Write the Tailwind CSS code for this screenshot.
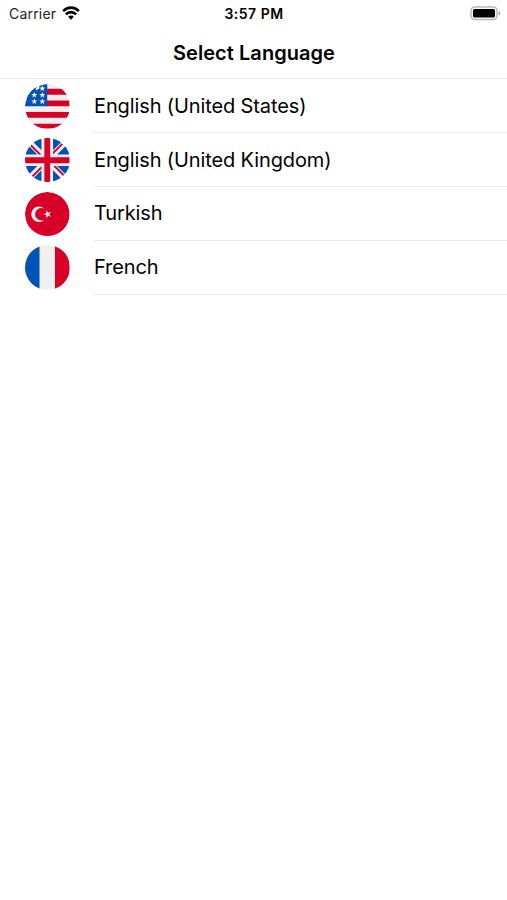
<!DOCTYPE html>
<html lang="en">
<head>
<meta charset="utf-8">
<title>Select Language</title>
<script src="https://cdn.jsdelivr.net/npm/@tailwindcss/browser@4"></script>
</head>
<body class="bg-white font-['Inter','Liberation_Sans',sans-serif] text-black">
<div class="flex h-[900px] w-[507px] flex-col overflow-hidden bg-white">
  <div class="grid h-[27px] shrink-0 grid-cols-3 items-center pl-[9px] pr-[6px]">
    <div class="flex items-center gap-[6px]">
      <span class="text-[14px] leading-[27px] tracking-[0.2px] text-[#222]">Carrier</span>
      <svg class="mb-[2px] h-[14px] w-[18px]" viewBox="0 0 19 14" preserveAspectRatio="none">
        <g fill="none" stroke="#000" stroke-width="2.7">
          <path d="M1.2 5.1a11.7 11.7 0 0 1 16.6 0"/>
          <path d="M4.1 8.4a7.6 7.6 0 0 1 10.8 0"/>
        </g>
        <path d="M9.5 13.7 6.5 10.7a4.2 4.2 0 0 1 6 0Z"/>
      </svg>
    </div>
    <div class="pr-[2px] text-center text-[14px] font-semibold leading-[27px] tracking-[0.5px]">3:57 PM</div>
    <svg class="h-[15px] w-[31px] justify-self-end" viewBox="0 0 31 15">
      <rect x="1" y="1" width="26" height="12.5" rx="3.8" fill="#fff" stroke="#b9b9b9" stroke-width="1.5"/>
      <rect x="3" y="3" width="22" height="8.5" rx="1.5"/>
      <path d="M28.6 5a2.4 2.4 0 0 1 0 4.6Z" fill="#aaa"/>
    </svg>
  </div>
  <header class="flex h-[52px] shrink-0 items-center justify-center border-b border-[#ebebeb]">
    <h1 class="pl-[1px] text-[20px] font-semibold leading-[24px] tracking-[0.05px]">Select Language</h1>
  </header>
  <ul class="pt-[0.4px] text-[20px] tracking-[-0.12px]">
    <li class="flex h-[53.8px] items-center pl-[25px]">
      <svg class="mr-[24.5px] size-[44.5px] shrink-0 rounded-full" viewBox="0 0 512 512">
        <defs><path id="star" d="M0-37 9-11H36L14 5 22 31 0 15-22 31-14 5-36-11H-9Z"/></defs>
        <path fill="#fff" d="M0 0h256v256H0z"/>
        <path fill="#f0f0f0" d="M256 0h256v512H0V256h256z"/>
        <path fill="#d80027" d="M245 55.7h267v66.7H245zM245 189.2h267V256H245zM0 322.8h512v66.8H0zM0 456.3h512V512H0z"/>
        <path fill="#0052b4" d="M256 0v256H0q0-30 8-60l18-14-13-1q10-35 30-66l16-13h-8q28-36 66-63h25l-20 15 6 20 40-26-8-20Q195 0 256 0Z"/>
        <g fill="#f0f0f0">
          <use href="#star" x="199" y="52"/>
          <use href="#star" x="107" y="126"/><use href="#star" x="199" y="126"/>
          <use href="#star" x="107" y="202"/><use href="#star" x="199" y="202"/>
        </g>
      </svg>
      <span class="flex h-full flex-1 items-center border-b border-[#e8e8e8] pt-[0.6px]">English (United States)</span>
    </li>
    <li class="flex h-[53.8px] items-center pl-[25px]">
      <svg class="mr-[24.5px] size-[44.5px] shrink-0 rounded-full" viewBox="0 0 512 512">
        <path fill="#f0f0f0" d="M0 0h512v512H0z"/>
        <path fill="#0052b4" d="M0 47.2 142 189.2H0zM512 47.2 370 189.2h142zM0 464.8 142 322.8H0zM512 464.8 370 322.8h142zM47.2 0 189.2 142V0zM464.8 0 322.8 142V0zM47.2 512 189.2 370v142zM464.8 512 322.8 370v142z"/>
        <path fill="#d80027" d="M222.6 0h66.8v222.6H512v66.8H289.4V512h-66.8V289.4H0v-66.8h222.6zM322.8 322.8 437 437l15-16.4-97.7-97.8zM189.2 322.8 75 437l16.4 15 97.8-97.8zM189.2 189.2 75 75 60 91.4l97.7 97.8zM322.8 189.2 437 75l-16.4-15-97.8 97.7z"/>
      </svg>
      <span class="flex h-full flex-1 items-center border-b border-[#e8e8e8] pt-[0.6px]">English (United Kingdom)</span>
    </li>
    <li class="flex h-[53.8px] items-center pl-[25px]">
      <svg class="mr-[24.5px] size-[44.5px] shrink-0 rounded-full" viewBox="0 0 512 512">
        <circle cx="256" cy="256" r="256" fill="#d80027"/>
        <path fill="#f0f0f0" d="m245.5 209.2 21 28.9 34-11-21 28.9 21 29-34-11.1-21 28.9v-35.8l-34-11 34-11zM188.2 328.3a72.3 72.3 0 1 1 34.4-136 89 89 0 1 0 0 127.3 72 72 0 0 1-34.4 8.7z"/>
      </svg>
      <span class="flex h-full flex-1 items-center border-b border-[#e8e8e8]">Turkish</span>
    </li>
    <li class="flex h-[53.8px] items-center pl-[25px]">
      <svg class="mr-[24.5px] size-[44.5px] shrink-0 rounded-full" viewBox="0 0 512 512">
        <path fill="#f0f0f0" d="M0 0h512v512H0z"/>
        <path fill="#0052b4" d="M0 0h167v512H0z"/>
        <path fill="#d80027" d="M345 0h167v512H345z"/>
      </svg>
      <span class="flex h-full flex-1 items-center border-b border-[#e8e8e8]">French</span>
    </li>
  </ul>
</div>
</body>
</html>
